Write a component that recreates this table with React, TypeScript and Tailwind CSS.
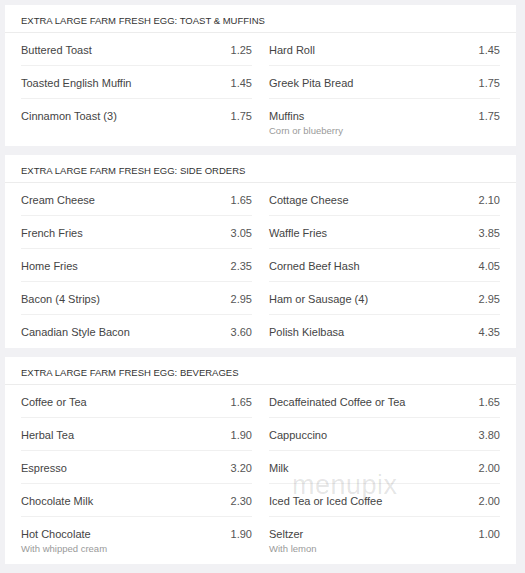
import React from "react";

type Item = { name: string; price: string; note?: string };
type Section = { title: string; left: Item[]; right: Item[] };

const sections: Section[] = [
  {
    title: "EXTRA LARGE FARM FRESH EGG: TOAST & MUFFINS",
    left: [
      { name: "Buttered Toast", price: "1.25" },
      { name: "Toasted English Muffin", price: "1.45" },
      { name: "Cinnamon Toast (3)", price: "1.75" },
    ],
    right: [
      { name: "Hard Roll", price: "1.45" },
      { name: "Greek Pita Bread", price: "1.75" },
      { name: "Muffins", price: "1.75", note: "Corn or blueberry" },
    ],
  },
  {
    title: "EXTRA LARGE FARM FRESH EGG: SIDE ORDERS",
    left: [
      { name: "Cream Cheese", price: "1.65" },
      { name: "French Fries", price: "3.05" },
      { name: "Home Fries", price: "2.35" },
      { name: "Bacon (4 Strips)", price: "2.95" },
      { name: "Canadian Style Bacon", price: "3.60" },
    ],
    right: [
      { name: "Cottage Cheese", price: "2.10" },
      { name: "Waffle Fries", price: "3.85" },
      { name: "Corned Beef Hash", price: "4.05" },
      { name: "Ham or Sausage (4)", price: "2.95" },
      { name: "Polish Kielbasa", price: "4.35" },
    ],
  },
  {
    title: "EXTRA LARGE FARM FRESH EGG: BEVERAGES",
    left: [
      { name: "Coffee or Tea", price: "1.65" },
      { name: "Herbal Tea", price: "1.90" },
      { name: "Espresso", price: "3.20" },
      { name: "Chocolate Milk", price: "2.30" },
      { name: "Hot Chocolate", price: "1.90", note: "With whipped cream" },
    ],
    right: [
      { name: "Decaffeinated Coffee or Tea", price: "1.65" },
      { name: "Cappuccino", price: "3.80" },
      { name: "Milk", price: "2.00" },
      { name: "Iced Tea or Iced Coffee", price: "2.00" },
      { name: "Seltzer", price: "1.00", note: "With lemon" },
    ],
  },
];

function Row({ item, last }: { item: Item; last: boolean }) {
  return (
    <div className={"pt-[10px] " + (last ? "pb-[9px]" : "pb-[8px] border-b border-[#f0f0f0]")}>
      <div className="flex justify-between text-[11px] leading-[14px] text-[#444]">
        <span>{item.name}</span>
        <span className="text-[#555]">{item.price}</span>
      </div>
      {item.note && (
        <div className="mt-[1px] text-[9.5px] leading-[13px] text-[#9a9a9a]">{item.note}</div>
      )}
    </div>
  );
}

export default function App() {
  return (
    <div
      className="relative min-h-[573px] w-[525px] bg-[#f1f1f4] pl-[5px] pr-[9px] pt-[5px] pb-[8px] flex flex-col gap-[9px]"
      style={{ fontFamily: '"Liberation Sans", Arial, sans-serif' }}
    >
      {sections.map((s) => {
        const rows = Math.max(s.left.length, s.right.length);
        const pairs = Array.from({ length: rows }, (_, i) => [s.left[i], s.right[i]] as const);
        return (
          <div key={s.title} className="bg-white">
            <div className="px-4 pt-[10px] pb-[5px] border-b border-[#ececec] text-[9.5px] leading-[12px] text-[#333]">
              {s.title}
            </div>
            <div className="px-4">
              {pairs.map(([l, r], i) => (
                <div key={i} className="grid grid-cols-2 gap-x-[17px]">
                  {l ? <Row item={l} last={i === rows - 1} /> : <div />}
                  {r ? <Row item={r} last={i === rows - 1} /> : <div />}
                </div>
              ))}
            </div>
          </div>
        );
      })}
      <div className="pointer-events-none absolute left-[292px] top-[470px] text-[27px] leading-[30px] font-light tracking-[0.5px] text-[rgba(0,0,0,0.11)]">
        menupix
      </div>
    </div>
  );
}
